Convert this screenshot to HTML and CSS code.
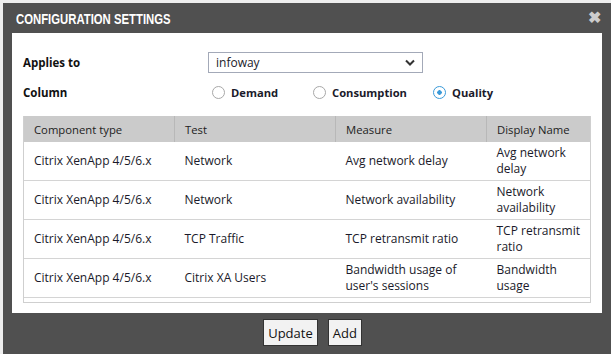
FILE: index.html
```html
<!DOCTYPE html>
<html lang="en">
<head>
    <meta charset="UTF-8">
    <title>Configuration Settings</title>
    <link rel="stylesheet" href="styles.css">
</head>
<body>
    <div class="dialog">
        <div class="dialog-title">
            <h1>CONFIGURATION SETTINGS</h1>
            <span class="close">&#x2716;</span>
        </div>
        <div class="panel">
            <div class="form-row first">
                <label class="field-label">Applies to</label>
                <div class="select-box">
                    <span>infoway</span>
                    <svg width="10" height="7" viewBox="0 0 10 7"><path d="M1 1.5 L5 5.5 L9 1.5" fill="none" stroke="#333" stroke-width="2"/></svg>
                </div>
            </div>
            <div class="form-row second">
                <label class="field-label">Column</label>
                <div class="radios">
                    <label class="radio"><input type="radio" name="col"> Demand</label>
                    <label class="radio wide"><input type="radio" name="col"> Consumption</label>
                    <label class="radio"><input type="radio" name="col" checked> Quality</label>
                </div>
            </div>
            <div class="table-wrap">
                <table>
                    <thead>
                        <tr>
                            <th class="c1">Component type</th>
                            <th class="c2">Test</th>
                            <th class="c3">Measure</th>
                            <th class="c4">Display Name</th>
                        </tr>
                    </thead>
                    <tbody>
                        <tr>
                            <td>Citrix XenApp 4/5/6.x</td>
                            <td>Network</td>
                            <td>Avg network delay</td>
                            <td>Avg network delay</td>
                        </tr>
                        <tr>
                            <td>Citrix XenApp 4/5/6.x</td>
                            <td>Network</td>
                            <td>Network availability</td>
                            <td>Network availability</td>
                        </tr>
                        <tr>
                            <td>Citrix XenApp 4/5/6.x</td>
                            <td>TCP Traffic</td>
                            <td>TCP retransmit ratio</td>
                            <td>TCP retransmit ratio</td>
                        </tr>
                        <tr>
                            <td>Citrix XenApp 4/5/6.x</td>
                            <td>Citrix XA Users</td>
                            <td>Bandwidth usage of user's sessions</td>
                            <td>Bandwidth usage</td>
                        </tr>
                    </tbody>
                </table>
            </div>
        </div>
        <div class="buttons">
            <button type="button">Update</button>
            <button type="button">Add</button>
        </div>
    </div>
</body>
</html>
```

FILE: styles.css
```css
body {
    margin: 0;
    padding: 3px 0 0 3px;
    background-color: #eeeeee;
    font-family: 'Open Sans', Arial, sans-serif;
    color: #1a1a2a;
}
.dialog {
    height: 351px;
    background-color: #505050;
    padding: 0 9px;
}
.dialog-title {
    height: 30px;
    display: flex;
    align-items: center;
    justify-content: space-between;
}
h1 {
    margin: 0 0 0 4px;
    color: #fff;
    font-family: 'Liberation Sans', Arial, sans-serif;
    font-size: 15px;
    font-weight: bold;
    transform: scaleX(0.755);
    transform-origin: left center;
    white-space: nowrap;
}
.close {
    color: #cccccc;
    font-size: 16px;
    font-weight: bold;
    margin: -2px 1px 0 0;
}
.panel {
    height: 280px;
    background: #fff;
    padding: 0 11px;
    box-sizing: border-box;
}
.form-row {
    display: flex;
    align-items: center;
}
.form-row.first {
    padding-top: 19px;
    height: 21px;
}
.form-row.second {
    height: 38px;
}
.field-label {
    width: 185px;
    font-size: 11.5px;
    font-weight: bold;
    color: #111;
}
.select-box {
    width: 215px;
    height: 21px;
    box-sizing: border-box;
    border: 1px solid #a3a9b8;
    display: flex;
    align-items: center;
    justify-content: space-between;
    padding: 0 7px;
    font-size: 12px;
}
.radios {
    display: flex;
    margin-left: 4px;
}
.radio {
    display: flex;
    align-items: center;
    font-size: 11.2px;
    font-weight: bold;
    width: 101px;
}
.radio.wide {
    width: 120px;
}
.radio input {
    appearance: none;
    width: 13px;
    height: 13px;
    margin: 0 6px 0 0;
    border: 1px solid #a8a8a8;
    border-radius: 50%;
    background: #fff;
}
.radio input:checked {
    border-color: #3a9ad9;
    background: radial-gradient(circle, #3a9ad9 0, #3a9ad9 2px, #fff 2.5px);
}
.table-wrap {
    margin-top: 5px;
    height: 186px;
    border: 1px solid #cfcfcf;
    border-top: none;
    overflow: hidden;
}
table {
    width: 100%;
    border-collapse: collapse;
    font-size: 12px;
}
th {
    background: #cbcbcb;
    height: 26px;
    padding: 0 10px;
    text-align: left;
    font-size: 11.3px;
    font-weight: normal;
    color: #222;
    border-left: 1px solid #b8b8b8;
}
th.c1 {
    border-left: none;
    width: 130px;
}
th.c2 { width: 140px; }
th.c3 { width: 130px; }
td {
    height: 38px;
    padding: 0 10px;
    line-height: 16px;
    border-bottom: 1px solid #d4d4d4;
}
.buttons {
    display: flex;
    justify-content: center;
    gap: 10px;
    padding: 6px 0 0 11px;
}
button {
    font-family: 'Open Sans', Arial, sans-serif;
    font-size: 13px;
    color: #111;
    background: #f2f2f2;
    border: 1px solid #333;
    padding: 3px 4px;
    height: 27px;
}
```
